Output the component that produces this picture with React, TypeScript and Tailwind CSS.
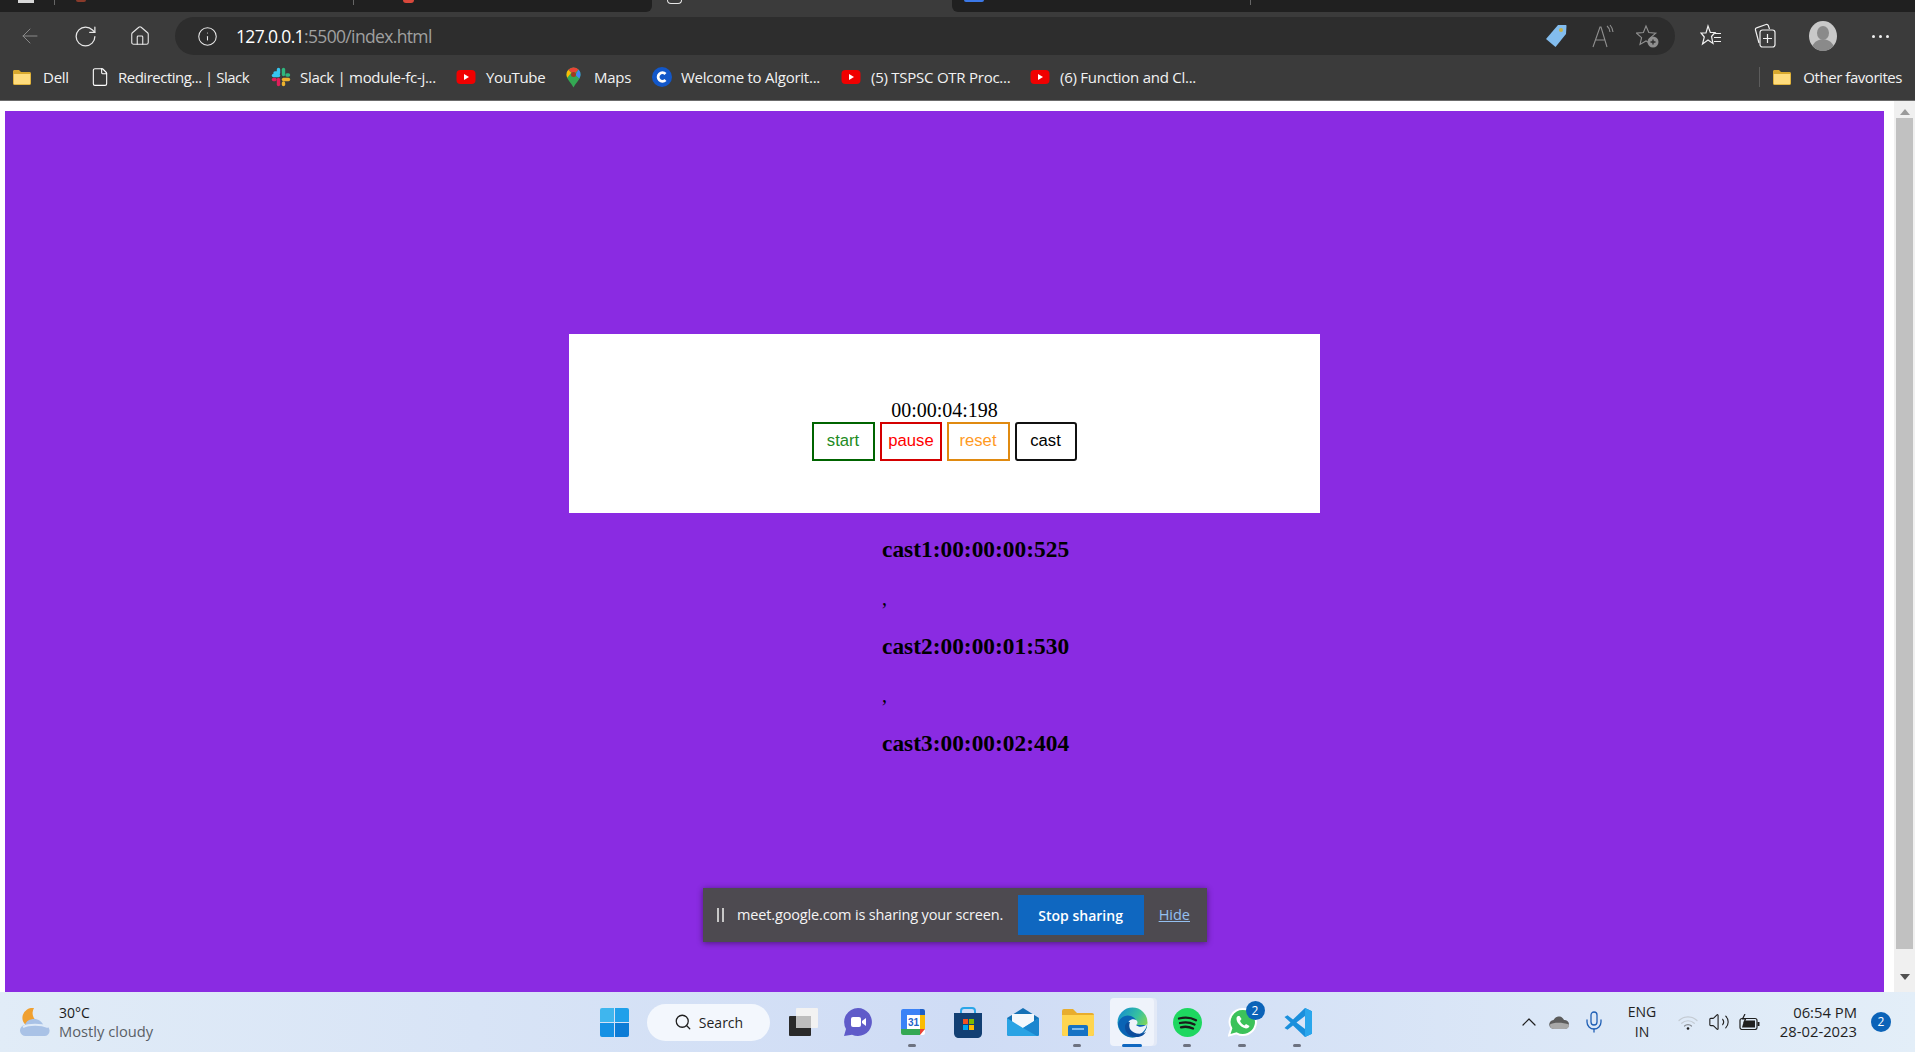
import React from "react";
import { ArrowLeft, RotateCw, Home, Info, ChevronUp, Mic, Volume2, Search, File } from "lucide-react";

const Folder = ({ size = 20 }: { size?: number }) => (
  <svg width={size} height={size} viewBox="0 0 20 20">
    <path d="M1 4.500C1 3.500 1.700 3 2.500 3H7l2 2h8.500c.9 0 1.500.6 1.500 1.500v10c0 .9-.6 1.500-1.500 1.500h-15C1.600 18 1 17.400 1 16.500z" fill="#d9a92e" />
    <path d="M1.800 7h16.400v9.500c0 .5-.3.8-.8.8H2.600c-.5 0-.8-.3-.8-.8z" fill="#ffdc7d" />
  </svg>
);

const YouTube = () => (
  <svg width="20" height="16" viewBox="0 0 20 16">
    <rect x="0.500" y="1" width="19" height="14" rx="4" fill="#f00000" />
    <path d="M8 5l5 3-5 3z" fill="#fff" />
  </svg>
);

const SlackLogo = () => (
  <svg width="20" height="20" viewBox="0 0 20 20" fill="none" strokeWidth="3.400" strokeLinecap="round">
    <path d="M7.500 2.500v3.500H4" stroke="#36c5f0" strokeLinejoin="round" />
    <path d="M2.500 8.500h5" stroke="#36c5f0" />
    <path d="M12.500 2.500v5" stroke="#2eb67d" />
    <path d="M17.500 8h-1.500" stroke="#2eb67d" />
    <path d="M17.500 12.500h-5" stroke="#ecb22e" />
    <path d="M12.500 17.500V16" stroke="#ecb22e" />
    <path d="M7.500 17.500v-5" stroke="#e01e5a" />
    <path d="M2.500 12.500H4" stroke="#e01e5a" />
  </svg>
);

const MapsPin = () => (
  <svg width="15" height="21" viewBox="0 0 15 21">
    <path d="M7.500 20.500C5 15.500.5 12.500.5 7.500a7 7 0 0 1 14 0c0 5-4.500 8-7 13z" fill="#34a853" />
    <path d="M.5 7.500a7 7 0 0 1 1.800-4.700l3 3-4 5a8 8 0 0 1-.8-3.300z" fill="#fbbc04" />
    <path d="M12.500 2.500a7 7 0 0 1 2 5c0 1.500-.5 2.800-1.200 4L9.500 8z" fill="#4285f4" />
    <path d="M2.300 2.800A7 7 0 0 1 12.500 2.500L9.500 5.500h-4z" fill="#ea4335" />
    <circle cx="7.500" cy="7.500" r="2.500" fill="#a13a20" />
  </svg>
);

const AlgoC = () => (
  <svg width="20" height="20" viewBox="0 0 20 20">
    <circle cx="10" cy="10" r="10" fill="#1257c9" />
    <path d="M13.500 7a4.300 4.300 0 1 0 0 6" fill="none" stroke="#fff" strokeWidth="2.800" />
  </svg>
);

const bookmarks = [
  { label: "Dell", width: "w-[78px]", icon: <Folder />, text: "ml-[11px]" },
  { label: "Redirecting... | Slack", width: "w-[181px]", icon: <File size={20} strokeWidth={1.300} color="#fff" />, text: "ml-[8px] tracking-[-0.5px]" },
  { label: "Slack | module-fc-j...", width: "w-[185px]", icon: <SlackLogo />, text: "ml-[9px] tracking-[-0.3px]" },
  { label: "YouTube", width: "w-[110px]", icon: <YouTube />, text: "ml-[10px] tracking-[-0.35px]" },
  { label: "Maps", width: "w-[86px]", icon: <MapsPin />, text: "ml-[13px]" },
  { label: "Welcome to Algorit...", width: "w-[189px]", icon: <AlgoC />, text: "ml-[9px]" },
  { label: "(5) TSPSC OTR Proc...", width: "w-[189px]", icon: <YouTube />, text: "ml-[10px]" },
  { label: "(6) Function and Cl...", width: "w-[200px]", icon: <YouTube />, text: "ml-[10px]" },
];

const TabStrip = () => (
  <div className="flex h-3 w-full bg-[#3b3b3b]">
    <div className="flex h-3 w-[652px] items-start rounded-br-md bg-[#202020]">
      <div className="ml-[18px] h-[3px] w-[16px] bg-[#d8d8d8]" />
      <div className="ml-[20px] h-[5px] w-px bg-[#666666]" />
      <div className="ml-[21px] h-[2px] w-[10px] rounded-b bg-[#8a3a2a]" />
      <div className="ml-[267px] h-[5px] w-px bg-[#666666]" />
      <div className="ml-[49px] h-[3px] w-[11px] rounded-b-full bg-[#d9483b]" />
    </div>
    <div className="flex w-[300px] items-start">
      <div className="ml-[15px] h-[4px] w-[15px] rounded-b border-x border-b border-[#e6e6e6]" />
    </div>
    <div className="flex h-3 flex-1 items-start rounded-bl-md bg-[#202020]">
      <div className="ml-[12px] h-[2px] w-[20px] rounded-b bg-[#3b78e7]" />
      <div className="ml-[266px] h-[5px] w-px bg-[#666666]" />
    </div>
  </div>
);

const Toolbar = () => (
  <div className="flex h-12 items-start bg-[#3b3b3b] pt-[5px]">
    <div className="flex h-[38px] w-[175px] items-center text-[#e8e8e8]">
      <span className="ml-[18px] w-[55px]"><ArrowLeft size={24} strokeWidth={1} color="#8a8a8a" /></span>
      <span className="w-[56px]"><RotateCw size={25} strokeWidth={1.200} /></span>
      <span><Home size={22} strokeWidth={1.200} /></span>
    </div>
    <div className="flex h-[38px] w-[1500px] items-center rounded-full bg-[#2d2d2d]">
      <span className="ml-[22px] w-[39px] text-[#e8e8e8]"><Info size={21} strokeWidth={1.200} /></span>
      <span className="text-[17.500px] tracking-[-0.65px] text-white">
        127.0.0.1<span className="text-[#a0a0a0]">:5500/index.html</span>
      </span>
      <span className="ml-auto w-[47px]">
        <svg width="22" height="24" viewBox="0 0 22 24">
          <path d="M13 1h7.500c.8 0 1 .5 1 1l-.5 8-10.500 13L1 15z" fill="#83bdee" />
          <circle cx="16" cy="6" r="2" fill="#c4b04a" />
        </svg>
      </span>
      <span className="w-[44px]">
        <svg width="22" height="24" viewBox="0 0 22 24" fill="none" stroke="#909090" strokeWidth="1.100">
          <path d="M1 23L8 3h1l6 20M3.500 16h9.500" />
          <path d="M15 2a8 8 0 0 1 3 6M18 1a12 12 0 0 1 3 7" />
        </svg>
      </span>
      <span className="mr-[17px] w-[22px]">
        <svg width="23" height="24" viewBox="0 0 23 24" fill="none">
          <path d="M10 2l2.800 6.500 7 .6-5.300 4.600 1.600 6.800L10 17l-6 3.500 1.600-6.800L.5 9.100l6.900-.6z" stroke="#909090" strokeWidth="1.100" />
          <circle cx="17" cy="18" r="5.500" fill="#8f8f8f" />
          <path d="M17 15.500v5M14.500 18h5" stroke="#2d2d2d" strokeWidth="1.300" />
        </svg>
      </span>
    </div>
    <div className="flex h-[38px] flex-1 items-center text-[#f0f0f0]">
      <span className="ml-[25px] w-[54px]">
        <svg width="22" height="24" viewBox="0 0 22 24" fill="none" stroke="currentColor" strokeWidth="1.200">
          <path d="M8 2l2.300 6.500H15L11.500 12.500l1.500 7-5-3.500-5.500 4 1.800-7L1 9h5z" />
          <path d="M15 9.500h6M14 13.500h7M14 17.500h7" />
        </svg>
      </span>
      <span className="w-[55px]">
        <svg width="22" height="26" viewBox="0 0 22 26" fill="none" stroke="currentColor" strokeWidth="1.200">
          <path d="M5 20L1.500 7c-.3-1 .2-2 1-2.200L12 1.500c1-.3 2 .2 2.300 1L15.500 6" />
          <rect x="6" y="7" width="15" height="17" rx="2.500" />
          <path d="M13.500 11v9M9 15.500h9" />
        </svg>
      </span>
      <span className="w-[63px]">
        <svg width="28" height="30" viewBox="0 0 28 30">
          <ellipse cx="14" cy="15" rx="14" ry="15" fill="#c9c9c9" />
          <ellipse cx="14" cy="12" rx="6" ry="7" fill="#8a8a8a" />
          <path d="M3.500 25c2-5 6-6.500 10.500-6.500S22.500 20 24.500 25a14 15 0 0 1-21 0z" fill="#8a8a8a" />
        </svg>
      </span>
      <span className="flex gap-[4px]">
        <span className="h-[3px] w-[3px] rounded-full bg-[#f0f0f0]" />
        <span className="h-[3px] w-[3px] rounded-full bg-[#f0f0f0]" />
        <span className="h-[3px] w-[3px] rounded-full bg-[#f0f0f0]" />
      </span>
    </div>
  </div>
);

const BookmarksBar = () => (
  <div className="flex h-10 items-center bg-[#3b3b3b] pb-[6px] pl-3 text-[15px] tracking-[-0.25px] text-[#f2f2f2]">
    {bookmarks.map((b) => (
      <div key={b.label} className={`flex shrink-0 items-center ${b.width}`}>
        {b.icon}
        <span className={`whitespace-nowrap ${b.text}`}>{b.label}</span>
      </div>
    ))}
    <div className="ml-auto flex items-center pr-[13px]">
      <div className="mr-[12px] h-[20px] w-px bg-[#5c5c5c]" />
      <Folder />
      <span className="ml-[11px] whitespace-nowrap tracking-[-0.45px]">Other favorites</span>
    </div>
  </div>
);

const casts = ["cast1:00:00:00:525", "cast2:00:00:01:530", "cast3:00:00:02:404"];

const StopwatchPage = () => (
  <div className="min-w-0 flex-1 bg-white pl-[5px] pr-[10px] pt-[10px]">
    <div className="h-[881px] overflow-hidden bg-[#8a2be2] pt-[223px] text-[20px] text-black [font-family:'Liberation_Serif',serif]">
      <div className="ml-[564px] flex h-[179px] w-[751px] flex-col items-center bg-white pt-[65px]">
        <div className="h-[23px] leading-[23px]">00:00:04:198</div>
        <div className="flex gap-[5px] pr-[1px] text-[16.670px] [font-family:'Liberation_Sans',sans-serif]">
          <button className="h-[39px] w-[63px] border-2 border-[#006400] pb-[2px] text-[#228b22]">start</button>
          <button className="h-[39px] w-[62px] border-2 border-[#d40000] pb-[2px] pl-[1px] text-[#ff0000]">pause</button>
          <button className="h-[39px] w-[63px] border-2 border-[#e08a10] pb-[2px] text-[#ff9a1f]">reset</button>
          <button className="h-[39px] w-[62px] rounded-[3px] border-2 border-[#111111] pb-[2px] text-black">cast</button>
        </div>
      </div>
      <div className="ml-[877px]">
        {casts.map((c, i) => (
          <div key={c}>
            <h3 className="my-[23.400px] text-[23.400px] font-bold leading-[27px]">{c}</h3>
            {i < casts.length - 1 && <div className="h-[23px] leading-[23px]">,</div>}
          </div>
        ))}
      </div>
    </div>
  </div>
);

const Scrollbar = () => (
  <div className="flex w-[21px] flex-col items-center bg-[#f0f0f0] px-[2px]">
    <div className="mt-[8px] h-0 w-0 border-x-[5px] border-b-[6px] border-x-transparent border-b-[#9a9a9a]" />
    <div className="mt-[3px] h-[831px] w-[17px] bg-[#c1c1c1]" />
    <div className="mt-[25px] h-0 w-0 border-x-[5px] border-t-[6px] border-x-transparent border-t-[#505050]" />
  </div>
);

const ShareBar = () => (
  <div className="absolute left-[703px] top-[888px] flex h-[54px] w-[504px] items-center bg-[#4d4a50] text-[#f5f5f5] shadow-[0_1px_6px_rgba(0,0,0,0.45)] [font-family:'Open_Sans',sans-serif]">
    <span className="ml-[14px] h-[14px] w-[7px] border-x-2 border-[#c8c8c8]" />
    <span className="ml-[13px] whitespace-nowrap text-[14.500px] tracking-[-0.15px]">meet.google.com is sharing your screen.</span>
    <span className="ml-auto flex h-10 w-[126px] items-center justify-center bg-[#0f67c0] text-[14px] font-semibold text-white">Stop sharing</span>
    <span className="ml-[15px] mr-[17px] text-[14.500px] text-[#94c0f0] underline">Hide</span>
  </div>
);

const WinLogo = () => (
  <div className="grid h-[29px] w-[29px] grid-cols-2 gap-[1px]">
    <div className="rounded-tl-[2px] bg-[#3fb6ee]" />
    <div className="rounded-tr-[2px] bg-[#1fa0ea]" />
    <div className="rounded-bl-[2px] bg-[#1591e4]" />
    <div className="rounded-br-[2px] bg-[#0c7cd6]" />
  </div>
);

const TaskIcon = ({ children, dot, active }: { children: React.ReactNode; dot?: boolean; active?: boolean }) => (
  <div className="relative flex h-[48px] w-[55px] shrink-0 items-center justify-center">
    {active && (
      <>
        <span className="absolute bottom-0 left-[8px] top-0 w-[44px] rounded-[4px] bg-[#e3e9f6]" />
        <span className="absolute bottom-0 left-[5px] top-0 w-[44px] rounded-[4px] bg-[#eff3fb]" />
      </>
    )}
    <span className="relative flex">{children}</span>
    {dot && <span className="absolute bottom-[-1px] left-[23px] h-[3px] w-[8px] rounded-full bg-[#6d7280]" />}
    {active && <span className="absolute bottom-[-1px] left-[17px] h-[3px] w-[20px] rounded-full bg-[#0f67c0]" />}
  </div>
);

const Badge = ({ n }: { n: number }) => (
  <span className="absolute right-[-7px] top-[-6px] flex h-[19px] w-[19px] items-center justify-center rounded-full bg-[#0b63b8] text-[12px] text-white">{n}</span>
);

const Taskbar = () => (
  <div className="flex h-[60px] items-center bg-gradient-to-r from-[#e1ecf7] via-[#cfdcf5] to-[#e3eef8] text-[14px] [font-family:'Open_Sans',sans-serif]">
    <div className="flex w-[587px] shrink-0 items-center pl-[20px]">
      <svg width="31" height="29" viewBox="0 0 31 29">
        <path d="M14 0a10 10 0 1 0 7 15A10 10 0 0 1 14 0z" fill="#f0a030" />
        <path d="M6 28a5.500 5.500 0 0 1-1-11c1-4 5-6 9-6 4.500 0 8 2.500 9.500 6.500A5.300 5.300 0 0 1 25 28z" fill="#a9c2e6" />
        <path d="M3 19c6-3 18-3 25 0" stroke="#e0ebf8" strokeWidth="2" fill="none" />
      </svg>
      <div className="ml-[8px] leading-[19px]">
        <div className="text-[14px] text-[#1a1a1a]">30°C</div>
        <div className="text-[14.700px] text-[#5a5f66]">Mostly cloudy</div>
      </div>
    </div>
    <TaskIcon><WinLogo /></TaskIcon>
    <div className="ml-[5px] mr-[5px] flex h-[37px] w-[123px] shrink-0 items-center justify-center gap-[7px] rounded-full bg-[#f3f7fd] text-[#1f1f1f]">
      <Search size={18} strokeWidth={1.700} />
      <span>Search</span>
    </div>
    <TaskIcon>
      <svg width="30" height="30" viewBox="0 0 30 30">
        <rect x="8" y="1" width="22" height="20" rx="1" fill="#f2f2f2" />
        <rect x="1" y="9" width="22" height="20" rx="1" fill="#2a2a2a" />
        <rect x="8" y="9" width="15" height="12" fill="#bdbdbd" />
      </svg>
    </TaskIcon>
    <TaskIcon>
      <svg width="30" height="30" viewBox="0 0 30 30">
        <path d="M15 1a14 14 0 1 1-6 26.700L1 29l2-7A14 14 0 0 1 15 1z" fill="#5f5bc9" />
        <rect x="8" y="10" width="10" height="10" rx="2" fill="#fff" />
        <path d="M19 14l4-3v8l-4-3z" fill="#fff" />
      </svg>
    </TaskIcon>
    <TaskIcon dot>
      <svg width="26" height="28" viewBox="0 0 26 28">
        <rect x="1" y="1" width="24" height="26" rx="2" fill="#fff" />
        <path d="M1 3a2 2 0 0 1 2-2h4v20H1z" fill="#3b82f6" />
        <path d="M7 1h13v6H7z" fill="#3b82f6" />
        <path d="M20 1h3a2 2 0 0 1 2 2v4h-5z" fill="#1e5fc6" />
        <path d="M20 7h5v14h-5z" fill="#fbbc04" />
        <path d="M1 21h19v6H3a2 2 0 0 1-2-2z" fill="#34a853" />
        <path d="M20 21h5l-5 6z" fill="#ea4335" />
        <text x="13.500" y="18" fontSize="10" textAnchor="middle" fill="#2563c8" fontFamily="Liberation Sans" fontWeight="700">31</text>
      </svg>
    </TaskIcon>
    <TaskIcon>
      <svg width="30" height="31" viewBox="0 0 30 31">
        <path d="M8 8V4c0-2 1-3 3-3h8c2 0 3 1 3 3v4" fill="none" stroke="#2ba6e8" strokeWidth="2" />
        <path d="M1 6h28v20c0 3-2 5-5 5H6c-3 0-5-2-5-5z" fill="#123f73" />
        <rect x="10" y="12" width="5" height="5" fill="#f25022" />
        <rect x="16" y="12" width="5" height="5" fill="#7fba00" />
        <rect x="10" y="18" width="5" height="5" fill="#00a4ef" />
        <rect x="16" y="18" width="5" height="5" fill="#ffb900" />
      </svg>
    </TaskIcon>
    <TaskIcon>
      <svg width="32" height="28" viewBox="0 0 32 28">
        <path d="M0 10L16 0l16 10v16a2 2 0 0 1-2 2H2a2 2 0 0 1-2-2z" fill="#1571b5" />
        <path d="M5 6h22v10l-11 6-11-6z" fill="#f4f8fc" />
        <path d="M0 10l16 10 16-10v16a2 2 0 0 1-2 2H2a2 2 0 0 1-2-2z" fill="#29a3e4" />
        <path d="M32 10v16a2 2 0 0 1-2 2L16 20z" fill="#1b86cf" />
      </svg>
    </TaskIcon>
    <TaskIcon dot>
      <svg width="32" height="28" viewBox="0 0 32 28">
        <path d="M0 3a2 2 0 0 1 2-2h9l4 4h15a2 2 0 0 1 2 2v19a2 2 0 0 1-2 2H2a2 2 0 0 1-2-2z" fill="#e8ad2d" />
        <path d="M0 7h32v19a2 2 0 0 1-2 2H2a2 2 0 0 1-2-2z" fill="#ffd54f" />
        <path d="M6 19a2 2 0 0 1 2-2h16a2 2 0 0 1 2 2v9H6z" fill="#1672c4" />
        <rect x="10" y="20" width="12" height="2" fill="#7dbbee" />
      </svg>
    </TaskIcon>
    <TaskIcon active>
      <svg width="31" height="31" viewBox="0 0 31 31">
        <defs>
          <linearGradient id="edgeA" x1="0" y1="0" x2="1" y2="0.600">
            <stop offset="0" stopColor="#0f86d6" />
            <stop offset="0.600" stopColor="#35c1a0" />
            <stop offset="1" stopColor="#8ad84f" />
          </linearGradient>
        </defs>
        <circle cx="15.500" cy="15.500" r="15" fill="url(#edgeA)" />
        <path d="M1 17c1-6 7-10 13-8 5 2 7 6 4 9h12c0 7-7 12.500-14.500 12.500C8 30.500 2 25 1 17z" fill="#0a63b5" />
        <path d="M11 19c-1-5 4-8 8-6 2 1 2 4 0 5 3 3 8 2 11-1-1 8-9 13-14 11-4-1-5-5-5-9z" fill="#eff3fb" />
        <path d="M8 20c0 6 5 10 11 10 5 0 8-2 10-5-5 3-13 2-16-3-1-2-1-5 0-7-3 0-5 2-5 5z" fill="#0d4d9c" />
      </svg>
    </TaskIcon>
    <TaskIcon dot>
      <svg width="29" height="29" viewBox="0 0 29 29">
        <circle cx="14.500" cy="14.500" r="14.500" fill="#1ed760" />
        <path d="M6 10.500c6-1.500 12-1 17 1.700M7 15c5-1.200 10-.8 14.500 1.500M8 19.300c4-1 8-.7 12 1.200" fill="none" stroke="#1a1a1a" strokeWidth="2.300" strokeLinecap="round" />
      </svg>
    </TaskIcon>
    <TaskIcon dot>
      <svg width="30" height="30" viewBox="0 0 30 30">
        <path d="M15 2a13 13 0 1 1-6.500 24.300L1 28.500l2.300-7.200A13 13 0 0 1 15 2z" fill="#3cc25a" stroke="#fff" strokeWidth="2" />
        <path d="M10 9c-2 1-2 4 0 7s5 5 8 5.500c2 0 3-1 3.500-2.500l-3.500-2-1.500 1.500c-2-1-3.500-2.500-4.500-4.500L13.500 12l-2-3z" fill="#fff" />
      </svg>
      <Badge n={2} />
    </TaskIcon>
    <TaskIcon dot>
      <svg width="30" height="31" viewBox="0 0 30 31">
        <path d="M22 1l7 3.300v22.400L22 30 10 18.500l-5.500 4.200L1.500 21l6-5.500-6-5.500 3-1.700L10 12.500z" fill="#1a8fdc" />
        <path d="M22 1l7 3.300v22.400L22 30z" fill="#2aa6ec" />
        <path d="M22 9v13l-8.500-6.500z" fill="#dbe5f7" />
      </svg>
    </TaskIcon>
    <div className="ml-auto flex h-full items-center pr-[24px] text-[#1f1f1f]">
      <span className="flex w-[30px] justify-center"><ChevronUp size={24} strokeWidth={1.200} /></span>
      <span className="flex w-[30px] justify-center">
        <svg width="21" height="13" viewBox="0 0 21 13">
          <path d="M5 13a4.500 4.500 0 0 1-.5-9C6 1 9 0 11 .5c2 .5 3.500 2 4 3.500a4.500 4.500 0 0 1 1 9z" fill="#5c5c5c" />
          <path d="M1 8.500C4 6 14 6 20 8.500V9a4 4 0 0 1-4 4H5a4 4 0 0 1-4-4z" fill="#a8a8a8" />
        </svg>
      </span>
      <span className="flex w-[40px] justify-center text-[#1f5fb5]"><Mic size={24} strokeWidth={1.300} /></span>
      <div className="w-[56px] text-center text-[14px] leading-[20px]">
        <div>ENG</div>
        <div>IN</div>
      </div>
      <span className="flex w-[36px] justify-center">
        <svg width="20" height="15" viewBox="0 0 20 15" fill="none" strokeLinecap="round">
          <path d="M1 5.500a13 13 0 0 1 18 0M3.700 8.300a9 9 0 0 1 12.600 0" stroke="#c4cbd3" strokeWidth="1.200" />
          <path d="M6.500 11a5 5 0 0 1 7 0" stroke="#8a8f96" strokeWidth="1.200" />
          <circle cx="10" cy="13.500" r="1.300" fill="#1f1f1f" />
        </svg>
      </span>
      <span className="flex w-[26px] justify-center"><Volume2 size={22} strokeWidth={1.200} /></span>
      <span className="flex w-[34px] justify-center">
        <svg width="21" height="16" viewBox="0 0 21 16">
          <rect x="1" y="4.500" width="17" height="11" rx="2" fill="none" stroke="#1f1f1f" strokeWidth="1.200" />
          <path d="M5 6.500h11v7H3z" fill="#1f1f1f" />
          <rect x="18.500" y="8" width="2" height="4" fill="#1f1f1f" />
          <path d="M6 0L3.500 5h3L5 9" fill="none" stroke="#1f1f1f" strokeWidth="1.200" />
        </svg>
      </span>
      <div className="w-[91px] text-right text-[14.800px] leading-[19px]">
        <div>06:54 PM</div>
        <div>28-02-2023</div>
      </div>
      <span className="ml-[14px] flex h-5 w-5 items-center justify-center rounded-full bg-[#0b63b8] text-[12px] text-white">2</span>
    </div>
  </div>
);

export default function App() {
  return (
    <div className="relative flex h-[1052px] w-full flex-col overflow-hidden bg-white [font-family:'Open_Sans',sans-serif]">
      <TabStrip />
      <Toolbar />
      <BookmarksBar />
      <div className="h-px bg-[#6b6b6b]" />
      <div className="flex h-[891px]">
        <StopwatchPage />
        <Scrollbar />
      </div>
      <Taskbar />
      <ShareBar />
    </div>
  );
}
